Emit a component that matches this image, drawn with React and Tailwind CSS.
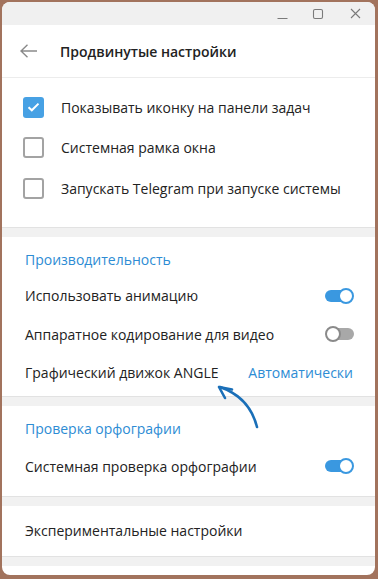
import React from 'react'

const font = { fontFamily: '"Open Sans", "Noto Sans", sans-serif' }

const Checkbox = ({ checked }) =>
  checked ? (
    <div className="w-[21px] h-[21px] rounded-[3px] bg-[#47a1e4] flex items-center justify-center">
      <svg width="13" height="10" viewBox="0 0 13 10">
        <path d="M1.5 5.2 L4.8 8.3 L11.5 1.6" fill="none" stroke="white" strokeWidth="2" />
      </svg>
    </div>
  ) : (
    <div className="w-[21px] h-[21px] rounded-[3px] border-2 border-[#a3a3a3] bg-white" />
  )

const Toggle = ({ on }) =>
  on ? (
    <div className="relative w-[29px] h-[16px]">
      <div className="absolute left-0 top-[2px] w-[27px] h-[12px] rounded-full bg-[#3a98e0]" />
      <div className="absolute right-0 top-0 w-[16px] h-[16px] rounded-full bg-white border-2 border-[#3a98e0]" />
    </div>
  ) : (
    <div className="relative w-[29px] h-[16px]">
      <div className="absolute right-0 top-[2px] w-[27px] h-[12px] rounded-full bg-[#a8a8a8]" />
      <div className="absolute left-0 top-0 w-[16px] h-[16px] rounded-full bg-white border-2 border-[#8a8a8a]" />
    </div>
  )

const Band = () => <div className="h-[10px] bg-[#f1f1f1] border-t border-[#e2e2e2] shrink-0" />

const CheckRow = ({ checked, label }) => (
  <div className="flex items-center h-[40.5px] pl-[21px]">
    <Checkbox checked={checked} />
    <span className="ml-[17px] text-[14px] text-[#222]">{label}</span>
  </div>
)

const ToggleRow = ({ label, on }) => (
  <div className="flex items-center justify-between h-[38.5px] pl-[23px] pr-[21px]">
    <span className="text-[14px] text-[#222]">{label}</span>
    <Toggle on={on} />
  </div>
)

const SectionTitle = ({ children }) => (
  <div className="pl-[23px] h-[20px] leading-[20px] text-[14px] text-[#2d8cd4] font-medium">
    {children}
  </div>
)

export default function App() {
  return (
    <div className="w-[378px] h-[579px] bg-[#a2735d] pt-[2px] pl-[2px] pr-[3px] pb-[4px]" style={font}>
      <div className="h-full bg-white rounded-[8px] overflow-hidden flex flex-col">
        <div className="h-[23px] bg-[#f0f0f0] flex items-center justify-end shrink-0">
          <svg width="11" height="12" viewBox="0 0 11 12" className="mr-[24px]">
            <path d="M0.5 10.5 H10.5" stroke="#7a7a7a" strokeWidth="1.2" />
          </svg>
          <svg width="12" height="12" viewBox="0 0 12 12" className="mr-[26px]">
            <rect x="1.5" y="1.5" width="9" height="9" rx="1.5" fill="none" stroke="#7a7a7a" strokeWidth="1.1" />
          </svg>
          <svg width="11" height="11" viewBox="0 0 11 11" className="mr-[14px]">
            <path d="M1 1 L10 10 M10 1 L1 10" stroke="#7a7a7a" strokeWidth="1.1" />
          </svg>
        </div>
        <div className="h-[53px] flex items-center border-b border-[#ececec] shrink-0">
          <svg width="18" height="14" viewBox="0 0 18 14" className="ml-[18px]">
            <path d="M1 7 H17 M7.5 0.8 L1 7 L7.5 13.2" fill="none" stroke="#8a8a8a" strokeWidth="1.4" />
          </svg>
          <span className="ml-[22px] text-[14px] font-semibold text-[#222]">Продвинутые настройки</span>
        </div>
        <div className="pt-[9px] pb-[18px]">
          <CheckRow checked label="Показывать иконку на панели задач" />
          <CheckRow label="Системная рамка окна" />
          <CheckRow label="Запускать Telegram при запуске системы" />
        </div>
        <Band />
        <div className="relative pt-[13px] pb-[4px]">
          <SectionTitle>Производительность</SectionTitle>
          <div className="h-[7px]" />
          <ToggleRow label="Использовать анимацию" on />
          <ToggleRow label="Аппаратное кодирование для видео" />
          <div className="flex items-center justify-between h-[38.5px] pl-[23px] pr-[22px]">
            <span className="text-[14px] text-[#222]">Графический движок ANGLE</span>
            <span className="text-[14px] text-[#2d8cd4]">Автоматически</span>
          </div>
          <svg width="52" height="52" viewBox="0 0 52 52" className="absolute left-[210px] top-[143px] z-10">
            <path d="M45 47 C41 31 31 15 8 7" fill="none" stroke="#1a6fb8" strokeWidth="2.6" strokeLinecap="round" />
            <path d="M7 7 L20 9.5 M7 7 L13 18" fill="none" stroke="#1a6fb8" strokeWidth="2.6" strokeLinecap="round" />
          </svg>
        </div>
        <Band />
        <div className="pt-[13px] pb-[10px]">
          <SectionTitle>Проверка орфографии</SectionTitle>
          <div className="h-[8px]" />
          <ToggleRow label="Системная проверка орфографии" on />
        </div>
        <Band />
        <div className="h-[50px] flex items-center pl-[23px] text-[14px] text-[#222] shrink-0">
          Экспериментальные настройки
        </div>
        <Band />
        <div className="flex-1" />
      </div>
    </div>
  )
}
